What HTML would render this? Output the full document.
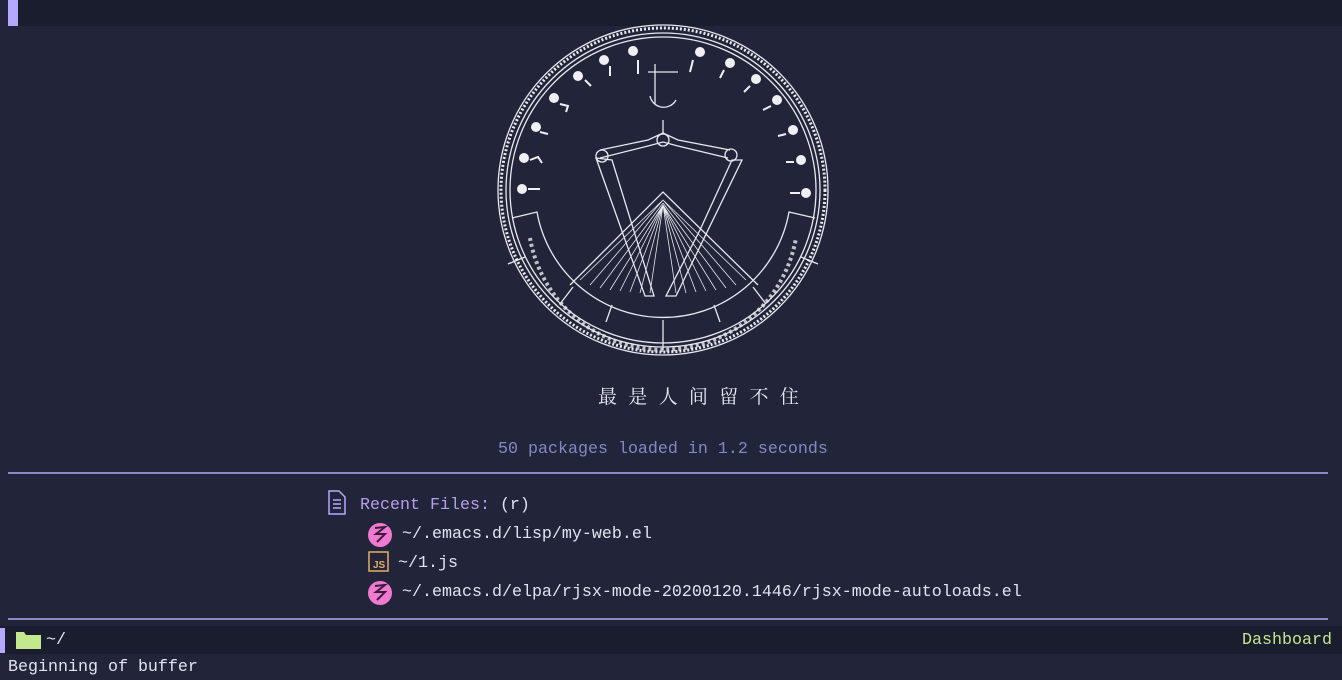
<!DOCTYPE html>
<html><head><meta charset="utf-8"><style>
html,body{margin:0;padding:0}
body{width:1342px;height:680px;background:#222539;position:relative;overflow:hidden;font-family:"Liberation Mono",monospace;font-size:16.67px;color:#e2e2f0}
.abs{position:absolute;white-space:pre;line-height:20px}
</style></head><body>
<div style="position:absolute;left:8px;top:0;width:1334px;height:26px;background:#1a1d2d"></div>
<div style="position:absolute;left:8px;top:0;width:10px;height:26px;background:#b4a8ff"></div>
<svg style="position:absolute;left:0;top:0" width="1342" height="680">
<g fill="none" stroke="#e8e8ee" stroke-width="1.3">
<circle cx="663" cy="190" r="165"/>
<circle cx="663" cy="190" r="162" stroke-dasharray="2 2" stroke-width="3"/>
<circle cx="663" cy="190" r="157"/>
<circle cx="663" cy="190" r="153"/>
<path d="M512 218 L537 212 A128 128 0 0 0 789 212 L815 218"/>
<path d="M663 320 V350 M573 287 L560 304 M753 287 L766 304 M525 257 L508 264 M801 257 L818 264 M612 305 L606 322 M714 305 L720 322"/>
<path d="M530 233 A135 135 0 0 0 796 233" stroke-dasharray="3 3" stroke-width="4" transform="translate(0 5)" opacity=".8"/>
<path d="M570 285 L663 192 L758 285"/>
<path d="M580 280 L663 200 M590 285 L663 200 M600 288 L663 203 M610 290 L663 205 M620 291 L663 205 M630 292 L663 205 M640 293 L663 205 M650 293 L663 205 M676 293 L663 205 M686 293 L663 205 M696 292 L663 205 M706 291 L663 205 M716 290 L663 205 M726 288 L663 203 M736 285 L663 200 M746 280 L663 200" stroke-width=".8"/>
<path d="M600 150 L648 140 L663 133 L678 140 L730 150 M600 158 L648 146 L663 142 L678 146 L728 158" />
<path d="M596 158 L645 296 L654 296 L612 160 Z M732 160 L700 230 L666 296 L676 296 L742 160 Z"/>
<circle cx="602" cy="156" r="6"/><circle cx="731" cy="155" r="6"/><circle cx="663" cy="140" r="6"/>
<path d="M663 120 V134 M650 96 A14 14 0 0 0 676 100 M655 64 V104 M648 72 H678"/>
</g>
<g fill="#f0f0f4">
<circle cx="522" cy="189" r="5"/><circle cx="524" cy="158" r="5"/><circle cx="536" cy="127" r="5"/><circle cx="554" cy="98" r="5"/><circle cx="578" cy="76" r="5"/><circle cx="604" cy="60" r="5"/><circle cx="633" cy="51" r="5"/><circle cx="700" cy="52" r="5"/><circle cx="730" cy="63" r="5"/><circle cx="756" cy="79" r="5"/><circle cx="777" cy="100" r="5"/><circle cx="793" cy="130" r="5"/><circle cx="801" cy="160" r="5"/><circle cx="806" cy="193" r="5"/>
</g>
<g stroke="#f0f0f4" stroke-width="2" fill="none">
<path d="M528 189 h12 M530 160 l8 -3 l4 6 M540 132 l8 2 M560 104 l8 2 l-2 6 M585 80 l6 6 M610 66 v10 M638 60 v14 M693 60 l-3 12 M724 70 l-4 8 M750 86 l-6 6 M771 106 l-8 4 M786 134 l-8 2 M794 162 l-8 0 M800 193 h-10"/>
</g>
<line x1="8" y1="473" x2="1328" y2="473" stroke="#8b87c8" stroke-width="2"/>
<line x1="8" y1="619" x2="1328" y2="619" stroke="#8b87c8" stroke-width="2"/>
<rect x="0" y="626" width="1342" height="28" fill="#1a1d2d"/>
<rect x="0" y="628" width="5" height="25" fill="#b4a8ff"/>
<path d="M16 632 h8 l2 3 h15 v14 h-25z" fill="#c3e88d"/>
<g fill="none" stroke="#b4a8ff" stroke-width="1.5"><path d="M329 491 h10 l6 6 v17 h-16 z"/><path d="M333 500 h8 M333 504 h8 M333 508 h8"/></g>
<circle cx="380" cy="535" r="12" fill="#f07ad0"/><path d="M375 528 l10 -1 -9 7 9 0 -8 8" stroke="#3a1b3a" stroke-width="2" fill="none"/>
<circle cx="380" cy="593" r="12" fill="#f07ad0"/><path d="M375 586 l10 -1 -9 7 9 0 -8 8" stroke="#3a1b3a" stroke-width="2" fill="none"/>
<rect x="369" y="552" width="19" height="19" fill="none" stroke="#e5b060" stroke-width="1.5"/>
<text x="373" y="568" font-family="Liberation Sans" font-weight="bold" font-size="10" fill="#e5b060">JS</text>
</svg>
<div class="abs" style="left:598px;top:388px;font-family:'Liberation Serif','Noto Serif CJK SC',serif;font-size:19px;letter-spacing:11.3px;color:#eaeaf2">最是人间留不住</div>
<div class="abs" style="left:498px;top:440px;color:#8288c4">50 packages loaded in 1.2 seconds</div>
<div class="abs" style="left:360px;top:496px;color:#b4a0ea">Recent Files: <span style="color:#e2e2f0">(r)</span></div>
<div class="abs" style="left:402px;top:525px">~/.emacs.d/lisp/my-web.el</div>
<div class="abs" style="left:398px;top:554px">~/1.js</div>
<div class="abs" style="left:402px;top:583px">~/.emacs.d/elpa/rjsx-mode-20200120.1446/rjsx-mode-autoloads.el</div>
<div class="abs" style="left:46px;top:631px">~/</div>
<div class="abs" style="left:1242px;top:631px;color:#c3e88d">Dashboard</div>
<div class="abs" style="left:8px;top:658px">Beginning of buffer</div>
</body></html>
